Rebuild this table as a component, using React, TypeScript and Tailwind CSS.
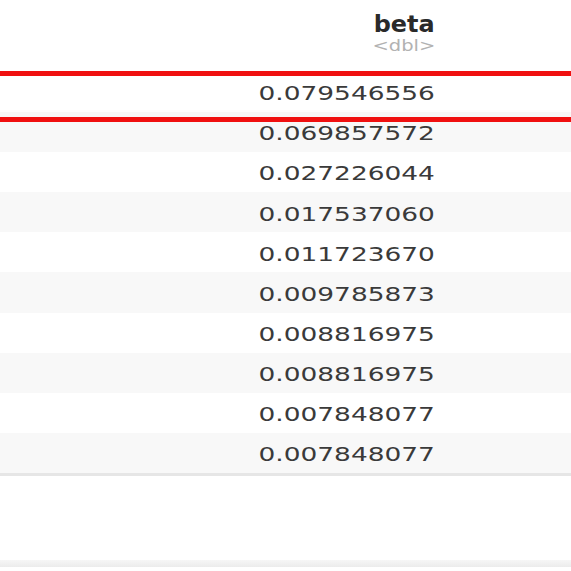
export default function App() {
  const rows = [
    "0.079546556",
    "0.069857572",
    "0.027226044",
    "0.017537060",
    "0.011723670",
    "0.009785873",
    "0.008816975",
    "0.008816975",
    "0.007848077",
    "0.007848077",
  ];
  return (
    <div className="relative w-[571px] h-[571px] overflow-hidden bg-white" style={{ fontFamily: '"DejaVu Sans", Verdana, sans-serif' }}>
      <div className="h-[72px] flex flex-col items-end pr-[136px] pt-[10px]">
        <span className="text-[23px] leading-[28px] font-bold text-[#2a2a2a] scale-x-[1.04] origin-right">beta</span>
        <span className="text-[15px] leading-[16px] text-[#b2b2b2] scale-x-[1.3] origin-right">&lt;dbl&gt;</span>
      </div>
      <div className="flex flex-col border-b-[3px] border-[#e6e6e6]">
        {rows.map((r, i) => (
          <div
            key={i}
            className={`h-[40.1px] flex items-center justify-end pr-[136px] pt-[3px] ${i % 2 === 1 ? "bg-[#f8f8f8]" : "bg-white"}`}
          >
            <span className="text-[19px] text-[#3a3a3a] scale-x-[1.39] origin-right">{r}</span>
          </div>
        ))}
      </div>
      <div className="h-[84px]" />
      <div className="h-[7px] bg-gradient-to-b from-[#f6f6f6] to-[#ececec]" />
      <div className="absolute left-[-10px] right-[-10px] top-[71px] h-[51px] border-y-[5px] border-[#f01010]" />
    </div>
  );
}
